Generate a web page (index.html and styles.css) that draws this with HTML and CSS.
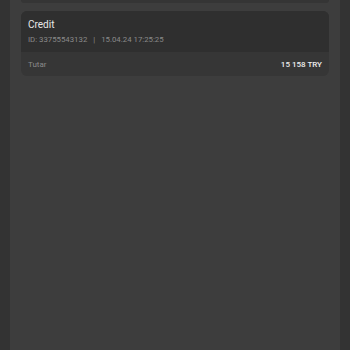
FILE: index.html
```html
<!DOCTYPE html>
<html>
<head>
<meta charset="utf-8">
<link rel="stylesheet" href="styles.css">
</head>
<body>
<div class="panel">
  <div class="prev-card"></div>
  <div class="card">
    <div class="card-head">
      <div class="title">Credit</div>
      <div class="meta"><span>ID: 33755543132</span><span class="sep">|</span><span>15.04.24 17:25:25</span></div>
    </div>
    <div class="card-foot">
      <span class="label">Tutar</span>
      <span class="amount">15 158 TRY</span>
    </div>
  </div>
</div>
</body>
</html>
```
FILE: styles.css
```css
html, body {
  margin: 0;
  padding: 0;
  background: #333333;
  font-family: Roboto, "Liberation Sans", sans-serif;
}
.panel {
  margin: 0 10px;
  height: 350px;
  background: #3d3d3d;
  padding: 0 11px;
  display: flex;
  flex-direction: column;
  gap: 8px;
}
.prev-card {
  height: 3px;
  background: #353535;
  border-radius: 0 0 6px 6px;
}
.card {
  border-radius: 6px;
  overflow: hidden;
  background: #363636;
}
.card-head {
  background: #2f2f2f;
  height: 41px;
  padding: 8px 7px 0;
  box-sizing: border-box;
}
.title {
  color: #e8e8e8;
  font-size: 10px;
  line-height: 12px;
}
.meta {
  margin-top: 4px;
  color: #8a8a8a;
  font-size: 7.8px;
  line-height: 10px;
  display: flex;
  gap: 5px;
}
.sep { margin: 0 1px; }
.card-foot {
  height: 24px;
  display: flex;
  align-items: center;
  justify-content: space-between;
  padding: 0 7px;
}
.label {
  color: #8a8a8a;
  font-size: 8px;
}
.amount {
  color: #eeeeee;
  font-size: 8px;
  font-weight: 500;
}
```
